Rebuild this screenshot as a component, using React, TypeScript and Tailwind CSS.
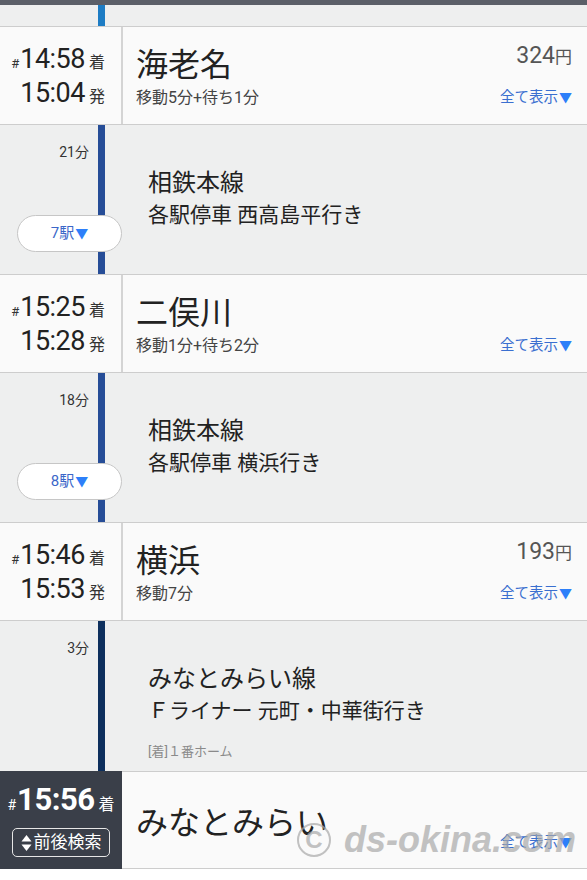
import React from "react";

const FONT = { fontFamily: "Roboto, 'Noto Sans CJK JP', sans-serif" };

function Tri() {
  return <span className="text-[#2d7ff9] text-[13px] ml-[1px]">▼</span>;
}

function Card({
  arr,
  dep,
  name,
  sub,
  price,
}: {
  arr: string;
  dep: string;
  name: string;
  sub: string;
  price?: string;
}) {
  return (
    <div className="flex h-[99px] border-y border-[#cdcdcd] bg-[#fafafa]">
      <div className="w-[121px] pt-[15px] pr-[16px] flex flex-col items-end">
        <div className="flex items-baseline h-[34px] leading-[34px]">
          <span className="text-[13px] text-[#333] mr-[1px]">#</span>
          <span className="text-[27px] text-[#222] tracking-[-0.5px]">{arr}</span>
          <span className="text-[16px] text-[#333] ml-[4px]">着</span>
        </div>
        <div className="flex items-baseline h-[34px] leading-[34px]">
          <span className="text-[27px] text-[#222] tracking-[-0.5px]">{dep}</span>
          <span className="text-[16px] text-[#333] ml-[4px]">発</span>
        </div>
      </div>
      <div className="w-[2px] bg-[#d4d4d4]" />
      <div className="flex flex-1 justify-between pl-[13px] pr-[15px]">
        <div className="flex flex-col">
          <div className="mt-[18px] text-[32px] leading-[40px] text-[#222]">{name}</div>
          <div className="mt-[3px] text-[16px] leading-[20px] text-[#444]">{sub}</div>
        </div>
        <div className="flex flex-col items-end">
          <div className="mt-[14px] h-[30px] leading-[30px] text-[#555]">
            {price && (
              <>
                <span className="text-[23px]">{price}</span>
                <span className="text-[17px]">円</span>
              </>
            )}
          </div>
          <div className="mt-[17px] text-[14.5px] leading-[20px] text-[#3a6fd0]">
            全て表示
            <Tri />
          </div>
        </div>
      </div>
    </div>
  );
}

function Seg({
  dur,
  lineClass,
  l1,
  l2,
  stops,
  platform,
  h,
}: {
  dur: string;
  lineClass: string;
  l1: string;
  l2: string;
  stops?: string;
  platform?: string;
  h: string;
}) {
  return (
    <div className={"relative flex bg-[#eeefef] " + h}>
      <div className="w-[98px] pr-[9px] pt-[18px] text-right text-[14px] leading-[18px] text-[#333]">
        {dur}
      </div>
      <div className={"w-[7px] " + lineClass} />
      <div className="pl-[43px] pt-[42px] leading-[32px] text-[#222]">
        <div className="text-[24px]">{l1}</div>
        <div className="text-[21px]">{l2}</div>
        {platform && (
          <div className="mt-[16px] text-[13px] leading-[18px] text-[#8a8a8a]">{platform}</div>
        )}
      </div>
      {stops && (
        <div className="absolute left-[17px] top-[90px] flex h-[37px] w-[105px] items-center justify-center rounded-full border border-[#c6c6c6] bg-white text-[15px] text-[#3b67c9]">
          {stops}
          <Tri />
        </div>
      )}
    </div>
  );
}

export default function App() {
  return (
    <div className="relative h-[880px] w-[587px] overflow-hidden bg-white" style={FONT}>
      <div className="h-[5px] bg-[#5b5f68]" />
      <div className="flex h-[21px] bg-[#eeefef]">
        <div className="w-[98px]" />
        <div className="w-[7px] bg-[#1d7cc4]" />
      </div>
      <Card arr="14:58" dep="15:04" name="海老名" sub="移動5分+待ち1分" price="324" />
      <Seg
        h="h-[149px]"
        dur="21分"
        lineClass="bg-[#264d97]"
        l1="相鉄本線"
        l2="各駅停車 西高島平行き"
        stops="7駅"
      />
      <Card arr="15:25" dep="15:28" name="二俣川" sub="移動1分+待ち2分" />
      <Seg
        h="h-[149px]"
        dur="18分"
        lineClass="bg-[#264d97]"
        l1="相鉄本線"
        l2="各駅停車 横浜行き"
        stops="8駅"
      />
      <Card arr="15:46" dep="15:53" name="横浜" sub="移動7分" price="193" />
      <Seg
        h="h-[150px]"
        dur="3分"
        lineClass="bg-[#0d2f5d]"
        l1="みなとみらい線"
        l2="Ｆライナー 元町・中華街行き"
        platform="[着]１番ホーム"
      />
      <div className="flex h-[98px]">
        <div className="flex w-[122px] flex-col items-center bg-[#3a3f49] pt-[10px]">
          <div className="flex items-baseline h-[38px] leading-[38px] text-white">
            <span className="text-[14px] mr-[1px]">#</span>
            <span className="text-[31px] font-bold tracking-[-0.5px]">15:56</span>
            <span className="text-[16px] ml-[4px]">着</span>
          </div>
          <div className="mt-[9px] flex h-[29px] w-[98px] items-center justify-center rounded-[5px] border border-[#e6e6e6] text-[17px] text-white">
            <svg width="11" height="18" viewBox="0 0 11 18" className="mr-[2px]">
              <path d="M5.5 1 L10.5 7.5 L0.5 7.5 Z" fill="white" />
              <path d="M5.5 17 L10.5 10.5 L0.5 10.5 Z" fill="white" />
            </svg>
            前後検索
          </div>
        </div>
        <div className="flex flex-1 justify-between border-y border-[#cdcdcd] bg-[#fafafa] pl-[14px] pr-[15px]">
          <div className="mt-[31px] text-[32px] leading-[40px] text-[#222]">みなとみらい</div>
          <div className="mt-[61px] text-[14.5px] leading-[20px] text-[#3a6fd0]">
            全て表示
            <Tri />
          </div>
        </div>
      </div>
      <div className="pointer-events-none absolute left-[297px] top-[820px] flex items-center opacity-70">
        <div
          className="flex h-[34px] w-[34px] items-center justify-center rounded-full border-2 border-[#a9a9a9] text-[24px] font-bold text-[#a9a9a9]"
          style={{ fontFamily: "'Liberation Sans', sans-serif" }}
        >
          C
        </div>
        <div
          className="ml-[13px] text-[36px] font-bold italic leading-[40px] text-[#a9a9a9]"
          style={{ fontFamily: "'Liberation Sans', sans-serif" }}
        >
          ds-okina.com
        </div>
      </div>
    </div>
  );
}
